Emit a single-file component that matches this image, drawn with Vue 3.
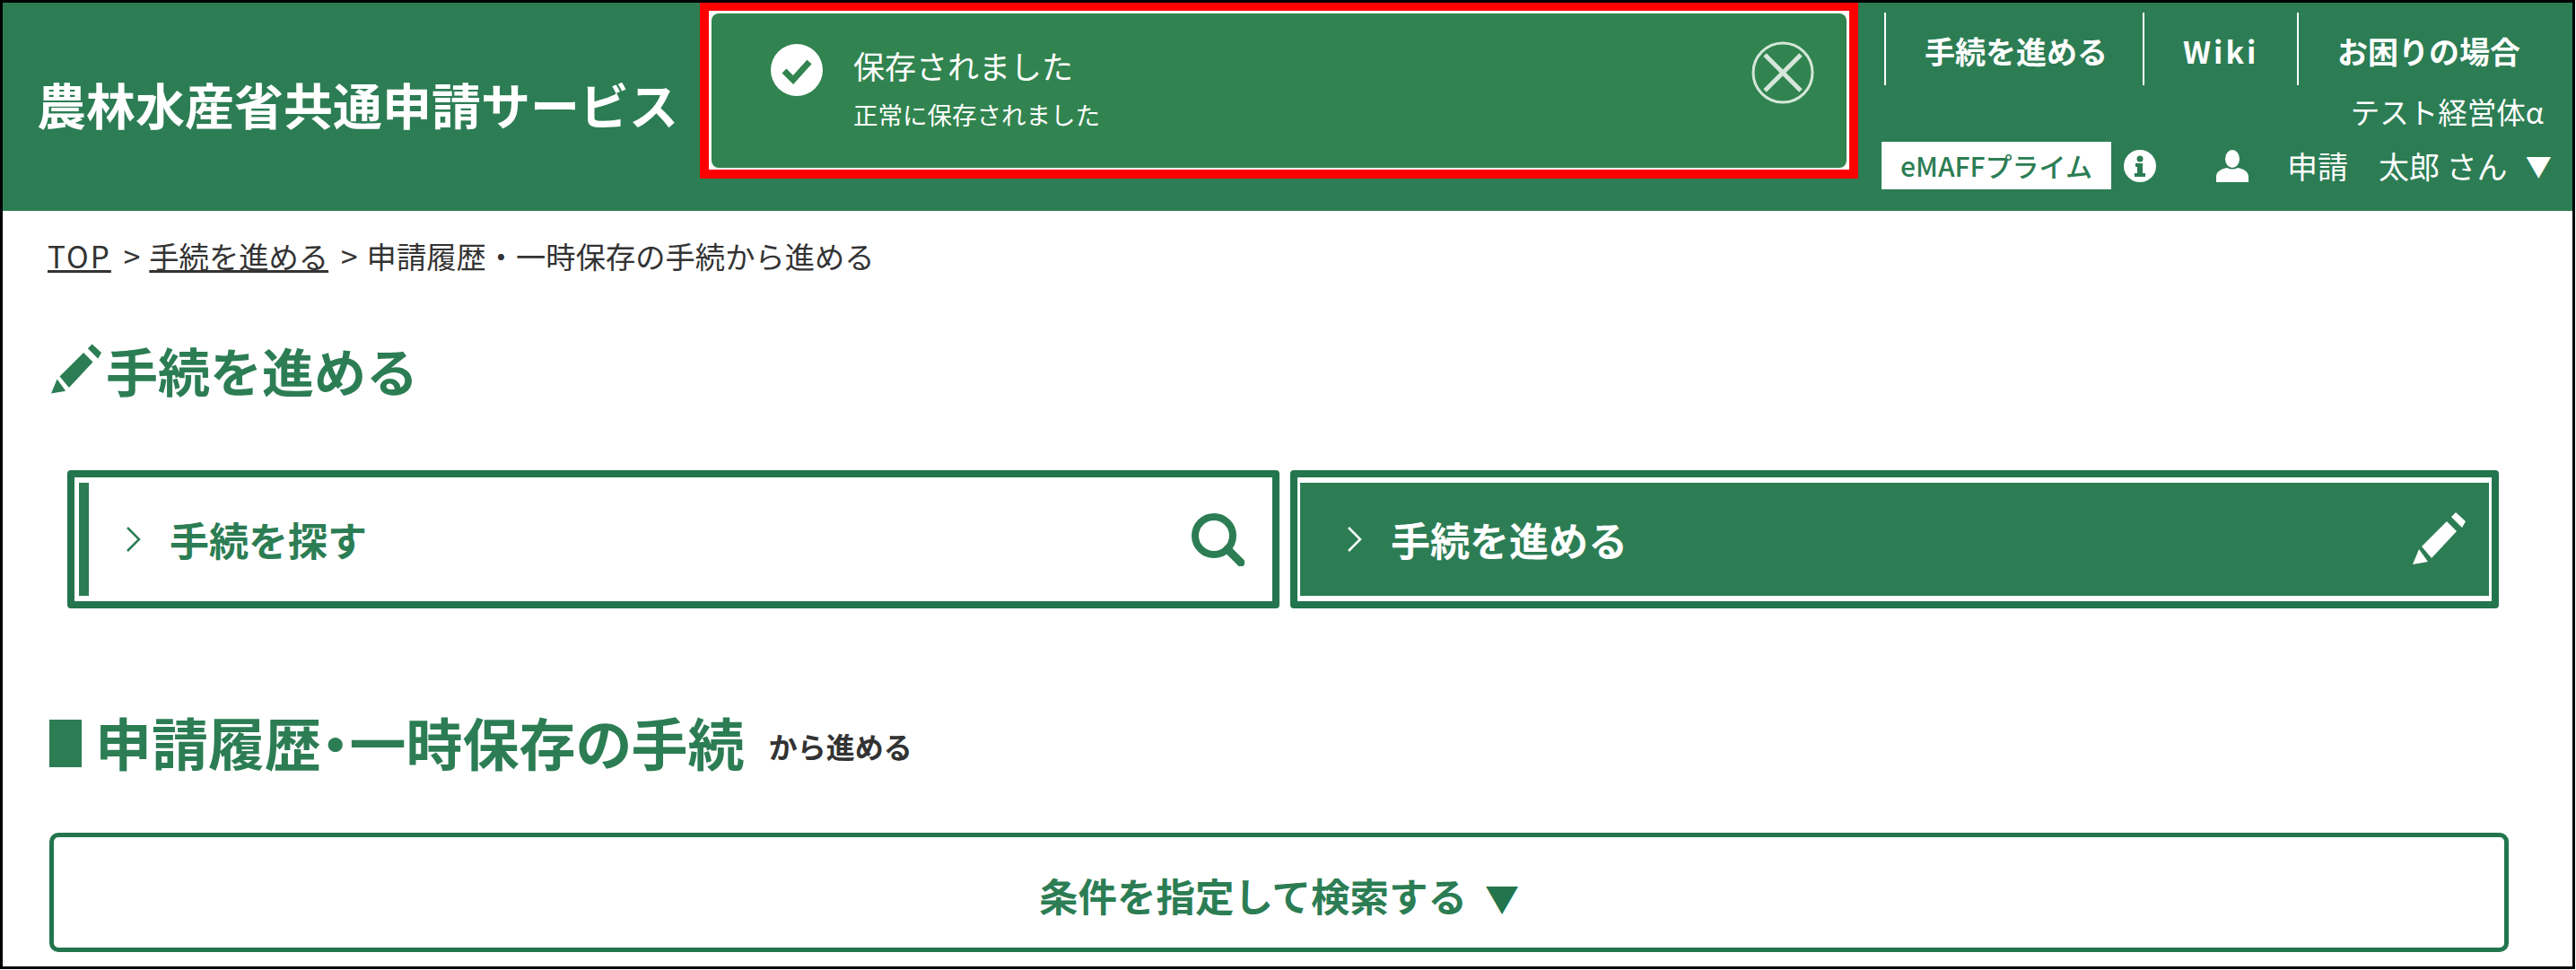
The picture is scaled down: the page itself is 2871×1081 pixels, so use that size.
<template>
  <div class="frame">
    <header class="header">
      <div class="site-title">農林水産省共通申請サービス</div>
      <div class="notice-mark">
        <div class="notice">
          <svg class="notice-check" viewBox="0 0 58 58">
            <circle cx="29" cy="29" r="29" fill="#fff" />
            <path d="M15 30l10 10 18-20" fill="none" stroke="#31844f" stroke-width="7" />
          </svg>
          <div class="notice-text">
            <div class="notice-title">保存されました</div>
            <div class="notice-sub">正常に保存されました</div>
          </div>
          <svg class="notice-close" viewBox="0 0 70 70">
            <circle cx="35" cy="35" r="33" fill="none" stroke="#d5e6da" stroke-width="3" />
            <path d="M15 15l40 40M55 15L15 55" fill="none" stroke="#d5e6da" stroke-width="5" />
          </svg>
        </div>
      </div>
      <div class="header-right">
        <nav class="nav">
          <a v-for="item in navItems" :key="item" class="nav-item">{{ item }}</a>
        </nav>
        <div class="org">テスト経営体α</div>
        <div class="user-row">
          <span class="prime">eMAFFプライム</span>
          <svg class="info" viewBox="0 0 36 36">
            <circle cx="18" cy="18" r="18" fill="#fff" />
            <circle cx="18" cy="10" r="3.5" fill="#2c7d54" />
            <path d="M13 15h8v11h3v4H12v-4h3v-7h-2z" fill="#2c7d54" />
          </svg>
          <svg class="user-icon" viewBox="0 0 36 36">
            <ellipse cx="18" cy="10" rx="8" ry="10" fill="#fff" />
            <path d="M0 36v-6c0-6 6-9 12-10 4 2 8 2 12 0 6 1 12 4 12 10v6z" fill="#fff" />
          </svg>
          <span class="user-name">申請　太郎 さん</span>
          <span class="user-caret">▼</span>
        </div>
      </div>
    </header>

    <main class="main">
      <div class="breadcrumb">
        <a class="crumb-link crumb-top">TOP</a><span class="crumb-sep">&gt;</span><a class="crumb-link">手続を進める</a><span class="crumb-sep">&gt;</span><span>申請履歴・一時保存の手続から進める</span>
      </div>

      <h1 class="page-title">
        <svg class="pencil" viewBox="0 0 60 60"><path :d="pencilPath" /></svg>
        <span>手続を進める</span>
      </h1>

      <div class="tabs">
        <div class="tab tab-search">
          <div class="tab-inner">
            <svg class="chevron" viewBox="0 0 18 28"><path d="M2 1l13 13L2 27" /></svg>
            <span class="tab-label">手続を探す</span>
            <svg class="tab-icon" viewBox="0 0 60 60">
              <circle cx="26" cy="26" r="21" fill="none" stroke="#2c7d54" stroke-width="8" />
              <path d="M41 41l15 15" stroke="#2c7d54" stroke-width="9" stroke-linecap="round" />
            </svg>
          </div>
        </div>
        <div class="tab tab-active">
          <div class="tab-inner">
            <svg class="chevron" viewBox="0 0 18 28"><path d="M2 1l13 13L2 27" /></svg>
            <span class="tab-label">手続を進める</span>
            <svg class="tab-icon" viewBox="0 0 60 60"><path :d="pencilPath" fill="#fff" /></svg>
          </div>
        </div>
      </div>

      <h2 class="section-title">
        <span class="section-mark"></span>
        <span class="section-name">申請履歴・一時保存の手続</span>
        <span class="section-suffix">から進める</span>
      </h2>

      <div class="search-toggle">条件を指定して検索する<span class="toggle-caret">▼</span></div>
    </main>
  </div>
</template>

<script setup>
const navItems = ['手続を進める', 'Wiki', 'お困りの場合']

const pencilPath = 'M0 58L7 41 17 55ZM10 38L38 10 49 21 21 51ZM43 5L48 0 59 10 55 17Z'
</script>

<style>
body { background: #fff; }
</style>

<style scoped>
.frame {
  width: 2870px;
  height: 1080px;
  box-sizing: border-box;
  border: 3px solid #000;
  background: #fff;
  overflow: hidden;
  font-family: "Noto Sans CJK JP", "Noto Sans", sans-serif;
  color: #333;
}
.header {
  display: flex;
  height: 232px;
  background: #2c7d54;
  color: #fff;
}
.site-title {
  width: 777px;
  flex: none;
  padding: 74px 0 0 38px;
  box-sizing: border-box;
  font-size: 55px;
  font-weight: 700;
  line-height: 76px;
  white-space: nowrap;
}
.notice-mark {
  width: 1291px;
  height: 197px;
  flex: none;
  box-sizing: border-box;
  margin-top: -1px;
  border: 10px solid #f00;
  padding: 3px 3px 2px;
  background: #fff;
}
.notice {
  display: flex;
  align-items: flex-start;
  height: 100%;
  box-sizing: border-box;
  padding: 34px 36px 0 66px;
  border-radius: 8px;
  background: #31844f;
}
.notice-check { width: 58px; height: 58px; flex: none; }
.notice-text { flex: 1; margin-left: 34px; }
.notice-title { font-size: 35px; line-height: 50px; margin-top: -1px; }
.notice-sub { font-size: 27.5px; line-height: 40px; margin-top: 9px; }
.notice-close { width: 70px; height: 70px; flex: none; margin-top: -3px; }
.header-right {
  flex: 1;
  min-width: 0;
  display: flex;
  flex-direction: column;
}
.nav {
  display: grid;
  grid-template-columns: 288px 172px auto;
  margin: 11px 0 0 29px;
}
.nav-item {
  height: 81px;
  box-sizing: border-box;
  border-left: 2px solid #fff;
  padding-left: 43px;
  font-size: 34px;
  font-weight: 700;
  line-height: 86px;
  white-space: nowrap;
}
.nav-item:nth-child(2) { letter-spacing: 3px; }
.org {
  margin: 7px 32px 0 0;
  text-align: right;
  font-size: 32.5px;
  line-height: 44px;
}
.user-row {
  display: flex;
  align-items: center;
  height: 53px;
  margin: 12px 0 0 26px;
}
.prime {
  width: 256px;
  height: 53px;
  flex: none;
  background: #fff;
  color: #2c7d54;
  font-size: 30px;
  font-weight: 500;
  line-height: 53px;
  text-align: center;
  white-space: nowrap;
}
.info { width: 36px; height: 36px; flex: none; margin-left: 14px; }
.user-icon { width: 36px; height: 36px; flex: none; margin-left: 67px; }
.user-name { margin-left: 43px; font-size: 34px; line-height: 53px; white-space: nowrap; }
.user-caret { margin-left: 20px; font-size: 29px; line-height: 53px; }

.main { padding: 30px 71px 0 52px; }
.breadcrumb {
  margin-left: -2px;
  font-size: 33.3px;
  line-height: 40px;
  white-space: nowrap;
}
.crumb-link { text-decoration: underline; }
.crumb-top { letter-spacing: 2px; }
.crumb-sep { margin: 0 10px 0 14px; }
.page-title {
  display: flex;
  align-items: center;
  gap: 4px;
  margin: 77px 0 0 2px;
  color: #2c7d54;
  font-size: 58px;
  font-weight: 700;
  line-height: 60px;
}
.pencil { width: 57px; height: 60px; flex: none; fill: #2c7d54; }
.tabs {
  display: flex;
  gap: 12px;
  margin: 82px 11px 0 20px;
}
.tab {
  flex: 1;
  height: 154px;
  box-sizing: border-box;
  border: 8px solid #22754c;
  border-radius: 4px;
  padding: 6px 5px;
}
.tab-inner {
  display: flex;
  align-items: center;
  height: 100%;
  box-sizing: border-box;
}
.tab-search { color: #2c7d54; }
.tab-search .tab-inner { border-left: 11px solid #2c7d54; padding: 0 26px 0 41px; }
.tab-active { padding: 6px 3px; color: #fff; }
.tab-active .tab-inner { background: #2c7d54; padding: 0 25px 0 52px; }
.chevron {
  width: 18px;
  height: 28px;
  flex: none;
  fill: none;
  stroke: currentColor;
  stroke-width: 2.5;
}
.tab-label {
  flex: 1;
  margin-left: 31px;
  font-size: 44px;
  font-weight: 700;
  line-height: 60px;
}
.tab-icon { width: 60px; height: 60px; flex: none; }
.section-title {
  display: flex;
  align-items: center;
  margin: 118px 0 0;
  font-weight: 700;
}
.section-mark { width: 36px; height: 53px; flex: none; background: #2c7d54; margin-top: 4px; }
.section-name {
  margin-left: 15px;
  color: #2c7d54;
  font-size: 63px;
  line-height: 60px;
  white-space: nowrap;
  font-feature-settings: "palt";
}
.section-suffix {
  margin: 10px 0 0 27px;
  font-size: 32px;
  line-height: 40px;
}
.search-toggle {
  height: 133px;
  box-sizing: border-box;
  margin-top: 72px;
  border: 5px solid #22754c;
  border-radius: 10px;
  color: #2c7d54;
  font-size: 43.5px;
  font-weight: 700;
  line-height: 130px;
  text-align: center;
  white-space: nowrap;
}
.toggle-caret { margin-left: 20px; color: #22754c; font-size: 38px; }
</style>
